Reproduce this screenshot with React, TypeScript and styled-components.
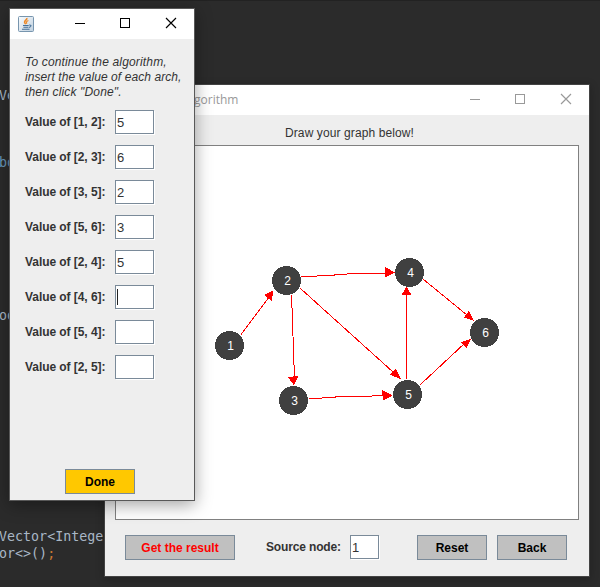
import React from "react";
import styled, { createGlobalStyle } from "styled-components";

const GlobalStyle = createGlobalStyle`
  * { box-sizing: border-box; }
  body { margin: 0; background: #2b2b2b; overflow: hidden; }
`;

const Desktop = styled.div`
  position: relative;
  width: 600px;
  height: 587px;
  overflow: hidden;
  background: #2b2b2b;
  font: 12px/15px "Liberation Sans", Arial, sans-serif;
  color: #333;
`;

const Editor = styled.div`
  display: flex;
  flex-direction: column;
  padding-top: 86px;
  border-top: 1px solid #222;
`;

const CodeLine = styled.pre<{ $gap?: number; $color?: string }>`
  margin: ${(p) => p.$gap ?? 0}px 0 0 -1px;
  font: 13.33px/17px "DejaVu Sans Mono", "Liberation Mono", monospace;
  color: ${(p) => p.$color ?? "#a9b7c6"};
`;

const Semicolon = styled.span`
  color: #cc7832;
`;

const Window = styled.section<{ $x: number; $y: number; $w: number; $h: number; $active?: boolean }>`
  position: absolute;
  left: ${(p) => p.$x}px;
  top: ${(p) => p.$y}px;
  width: ${(p) => p.$w}px;
  height: ${(p) => p.$h}px;
  display: flex;
  flex-direction: column;
  background: #eee;
  border: 1px solid ${(p) => (p.$active ? "#585858" : "#434343")};
  box-shadow: ${(p) => (p.$active ? "0 4px 16px rgba(0,0,0,.36)" : "0 2px 8px rgba(0,0,0,.25)")};
`;

const TitleBar = styled.header<{ $pad: number }>`
  flex: none;
  display: flex;
  align-items: center;
  height: 30px;
  padding-left: ${(p) => p.$pad}px;
  background: #fff;
`;

const Title = styled.span`
  flex: 1;
  font: 12px/16px "Open Sans", "Noto Sans", sans-serif;
  color: #999;
`;

const Spacer = styled.div`
  flex: 1;
`;

const Controls = styled.svg`
  display: block;
  width: 137px;
  height: 30px;
`;

const DialogBody = styled.div`
  flex: 1;
  display: flex;
  flex-direction: column;
  padding: 16px 0 6px 15px;
`;

const Intro = styled.div`
  display: flex;
  flex-direction: column;
  margin-bottom: 10px;
  font-style: italic;
  white-space: nowrap;
`;

const IntroLine = styled.span<{ $spacing: number }>`
  letter-spacing: ${(p) => p.$spacing}px;
`;

const Fields = styled.div`
  display: flex;
  flex-direction: column;
  gap: 10px;
`;

const FieldRow = styled.div`
  display: flex;
  height: 25px;
`;

const Label = styled.label<{ $w: number; $spacing?: number }>`
  width: ${(p) => p.$w}px;
  line-height: 24px;
  font-weight: bold;
  white-space: nowrap;
  letter-spacing: ${(p) => p.$spacing ?? 0}px;
`;

const Input = styled.div<{ $w: number }>`
  display: flex;
  align-items: center;
  width: ${(p) => p.$w - 1}px;
  height: 24px;
  padding: 0 1px;
  font-size: 13px;
  background: #fff;
  border: 1px solid #7a8a99;
  box-shadow: 1px 1px 0 #fff;
`;

const Caret = styled.span`
  width: 1px;
  height: 16px;
  background: #222;
`;

const Button = styled.button<{ $w?: number; $bg?: string; $fg?: string }>`
  width: ${(p) => p.$w ?? 70}px;
  height: 25px;
  padding: 1px 0 0;
  font: bold 12px/15px "Liberation Sans", Arial, sans-serif;
  color: ${(p) => p.$fg ?? "#000"};
  background: ${(p) => p.$bg ?? "#c0c0c0"};
  border: 1px solid #7a8a99;
  border-radius: 0;
`;

const DialogFooter = styled.div`
  display: flex;
  margin-top: auto;
  padding-left: 40px;
`;

const GraphBody = styled.div`
  flex: 1;
  display: flex;
  flex-direction: column;
  padding: 11px 10px 16px 10px;
`;

const Hint = styled.div`
  height: 19px;
  padding-left: 170px;
  letter-spacing: 0.1px;
`;

const Canvas = styled.svg`
  display: block;
  width: 464px;
  height: 375px;
  background: #fff;
  border: 1px solid #808080;
`;

const BottomBar = styled.div`
  display: flex;
  padding: 15px 0 0 10px;
`;

const SourceField = styled(FieldRow)`
  margin: 0 38px 0 31px;
`;

const ButtonPair = styled.div`
  display: flex;
  gap: 10px;
`;

const WindowControls = ({ color }: { color: string }) => (
  <Controls viewBox="0 0 137 30" fill="none" stroke={color}>
    <path d="M18 14.5H28" />
    <rect x="63.5" y="9.5" width="9" height="9" />
    <path d="M109 9L119 19M119 9L109 19" strokeWidth="1.15" />
  </Controls>
);

const JavaIcon = () => (
  <svg width="16" height="16" viewBox="0 0 16 16" fill="none">
    <defs>
      <linearGradient id="tile" x1="0" y1="0" x2="1" y2="1">
        <stop offset="0" stopColor="#fafcfd" />
        <stop offset="1" stopColor="#bfd0df" />
      </linearGradient>
    </defs>
    <rect x=".5" y=".5" width="15" height="15" rx="1" fill="url(#tile)" stroke="#7795ae" />
    <path d="M8.8 2C9.6 3.6 6.2 4.6 6.6 6.4Q6.8 7.3 7.7 8" stroke="#ef8a28" strokeWidth="1.6" />
    <path d="M10.4 4.5C8.5 5.2 8 6 8.8 7.7" stroke="#ef8a28" strokeWidth="1.2" />
    <path d="M5 9.5H10.7M5.4 11.3H10.2M4 13.3H11.5M11.2 9Q13.8 8.9 12.6 10.5Q12 11.2 10.8 11.4" stroke="#456f97" strokeWidth="1.1" />
  </svg>
);

const introLines: [string, number][] = [
  ["To continue the algorithm,", 0.16],
  ["insert the value of each arch,", 0.08],
  ['then click "Done".', 0.16],
];

const fields: [string, string][] = [
  ["1, 2", "5"],
  ["2, 3", "6"],
  ["3, 5", "2"],
  ["5, 6", "3"],
  ["2, 4", "5"],
  ["4, 6", "|"],
  ["5, 4", ""],
  ["2, 5", ""],
];

const nodes = [
  { id: 1, x: 229.5, y: 345.5 },
  { id: 2, x: 286.5, y: 280.5 },
  { id: 3, x: 293.5, y: 400.5 },
  { id: 4, x: 409.5, y: 272.5 },
  { id: 5, x: 407.5, y: 394.5 },
  { id: 6, x: 484.5, y: 332.5 },
];

const edges = [
  { line: "241,334.5 270,296", head: "273.5,290.5 264,295 271.5,301" },
  { line: "301,276.5 334,275.5 335,274.5 360,273.5 386,273.5", head: "395,272.5 385,267 385,277.5" },
  { line: "291.5,295 292.5,320 293.5,352 294.5,378", head: "294,385.5 288,377 298.5,376" },
  { line: "300.5,288.5 393,372", head: "401,379.5 390,374.5 395.5,368.5" },
  { line: "309,398.5 335,397.5 336,396.5 360,396.5 384,395.5", head: "392.5,395.5 382,390 383,400.5" },
  { line: "406.5,379 406.5,293", head: "406.5,286.5 401.5,295 411.5,295" },
  { line: "420.5,384.5 465,343", head: "471,339 461,342 466.5,348" },
  { line: "423.5,279.5 467,315", head: "474,321 464,317.5 469,310.5" },
];

export default function App() {
  return (
    <Desktop>
      <GlobalStyle />
      <Editor>
        <CodeLine>Ve</CodeLine>
        <CodeLine $gap={50} $color="#6897bb">bo</CodeLine>
        <CodeLine $gap={136}>oo</CodeLine>
        <CodeLine $gap={204}>Vector&lt;Integer</CodeLine>
        <CodeLine>or&lt;&gt;()<Semicolon>;</Semicolon></CodeLine>
      </Editor>

      <Window $x={104} $y={84} $w={486} $h={493}>
        <TitleBar $pad={89}>
          <Title>gorithm</Title>
          <WindowControls color="#999" />
        </TitleBar>
        <GraphBody>
          <Hint>Draw your graph below!</Hint>
          <Canvas viewBox="116 146 462 373" shapeRendering="crispEdges">
            {edges.map((e) => (
              <g key={e.head}>
                <polyline points={e.line} fill="none" stroke="#f00" />
                <polygon points={e.head} fill="#f00" />
              </g>
            ))}
            {nodes.map((n) => (
              <g key={n.id}>
                <circle cx={n.x} cy={n.y} r="14.5" fill="#404040" />
                <text x={n.x + 1} y={n.y + 4.5} fill="#fff" fontSize="12" textAnchor="middle">{n.id}</text>
              </g>
            ))}
          </Canvas>
          <BottomBar>
            <Button $w={110} $fg="#f00">Get the result</Button>
            <SourceField>
              <Label $w={84} $spacing={-0.15}>Source node:</Label>
              <Input $w={30}>1</Input>
            </SourceField>
            <ButtonPair>
              <Button>Reset</Button>
              <Button>Back</Button>
            </ButtonPair>
          </BottomBar>
        </GraphBody>
      </Window>

      <Window $x={9} $y={8} $w={186} $h={493} $active>
        <TitleBar $pad={8}>
          <JavaIcon />
          <Spacer />
          <WindowControls color="#000" />
        </TitleBar>
        <DialogBody>
          <Intro>
            {introLines.map(([text, spacing]) => (
              <IntroLine key={text} $spacing={spacing}>{text}</IntroLine>
            ))}
          </Intro>
          <Fields>
            {fields.map(([pair, value]) => (
              <FieldRow key={pair}>
                <Label $w={90} $spacing={-0.06}>Value of [{pair}]:</Label>
                <Input $w={40}>{value === "|" ? <Caret /> : value}</Input>
              </FieldRow>
            ))}
          </Fields>
          <DialogFooter>
            <Button $bg="#ffc800">Done</Button>
          </DialogFooter>
        </DialogBody>
      </Window>
    </Desktop>
  );
}
